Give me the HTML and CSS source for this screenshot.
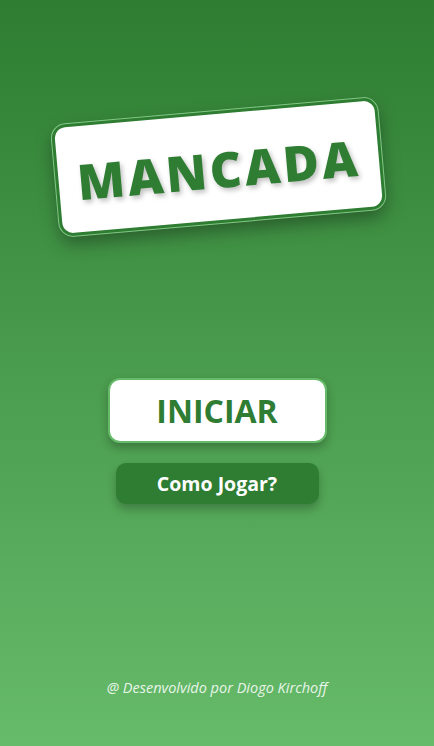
FILE: index.html
```html
<!DOCTYPE html>
<html lang="pt-BR">
<head>
<meta charset="utf-8">
<title>Mancada</title>
<link rel="stylesheet" href="styles.css">
</head>
<body>
<main class="screen">
  <div class="logo-area">
    <div class="logo-card">
      <h1 class="logo-text">MANCADA</h1>
    </div>
  </div>
  <div class="actions">
    <button class="btn-start">INICIAR</button>
    <button class="btn-help">Como Jogar?</button>
  </div>
  <footer class="credits">@ Desenvolvido por Diogo Kirchoff</footer>
</main>
</body>
</html>
```
FILE: styles.css
```css
* { box-sizing: border-box; }
html, body { margin: 0; padding: 0; }
body {
  font-family: "Open Sans", "Noto Sans", sans-serif;
  background: linear-gradient(180deg, #2e7d32 0%, #66bb6a 100%);
  min-height: 746px;
}
.screen {
  height: 746px;
  display: flex;
  flex-direction: column;
  align-items: center;
}
.logo-area {
  padding-top: 111px;
  padding-left: 3px;
}
.logo-card {
  width: 327px;
  height: 112px;
  background: #fff;
  border: 3px solid #2e7d32;
  border-radius: 14px;
  box-shadow: 0 0 0 1px #81c784, 0 8px 18px rgba(0,0,0,0.35);
  transform: rotate(-5deg);
  display: flex;
  align-items: center;
  justify-content: center;
}
.logo-text {
  margin: 0;
  font-size: 49px;
  font-weight: 800;
  letter-spacing: 3px;
  color: #2e7d32;
  text-shadow: 2px 3px 5px rgba(0,0,0,0.25);
  padding-top: 4px;
}
.actions {
  margin-top: 155px;
  display: flex;
  flex-direction: column;
  align-items: center;
  gap: 20px;
}
.btn-start {
  width: 219px;
  height: 65px;
  background: #fff;
  border: 2px solid #66bb6a;
  border-radius: 12px;
  color: #2e7d32;
  font-family: inherit;
  font-size: 32px;
  font-weight: 700;
  box-shadow: 0 5px 10px rgba(0,0,0,0.25);
  padding: 0;
}
.btn-help {
  width: 203px;
  height: 41px;
  background: #2e7d32;
  border: none;
  border-radius: 10px;
  color: #fff;
  font-family: inherit;
  font-size: 19.5px;
  font-weight: 700;
  box-shadow: 0 5px 10px rgba(0,0,0,0.25);
  padding: 0;
}
.credits {
  margin-top: auto;
  margin-bottom: 49px;
  font-size: 14.5px;
  font-style: italic;
  color: #e8f5e9;
  line-height: 18px;
}
```
